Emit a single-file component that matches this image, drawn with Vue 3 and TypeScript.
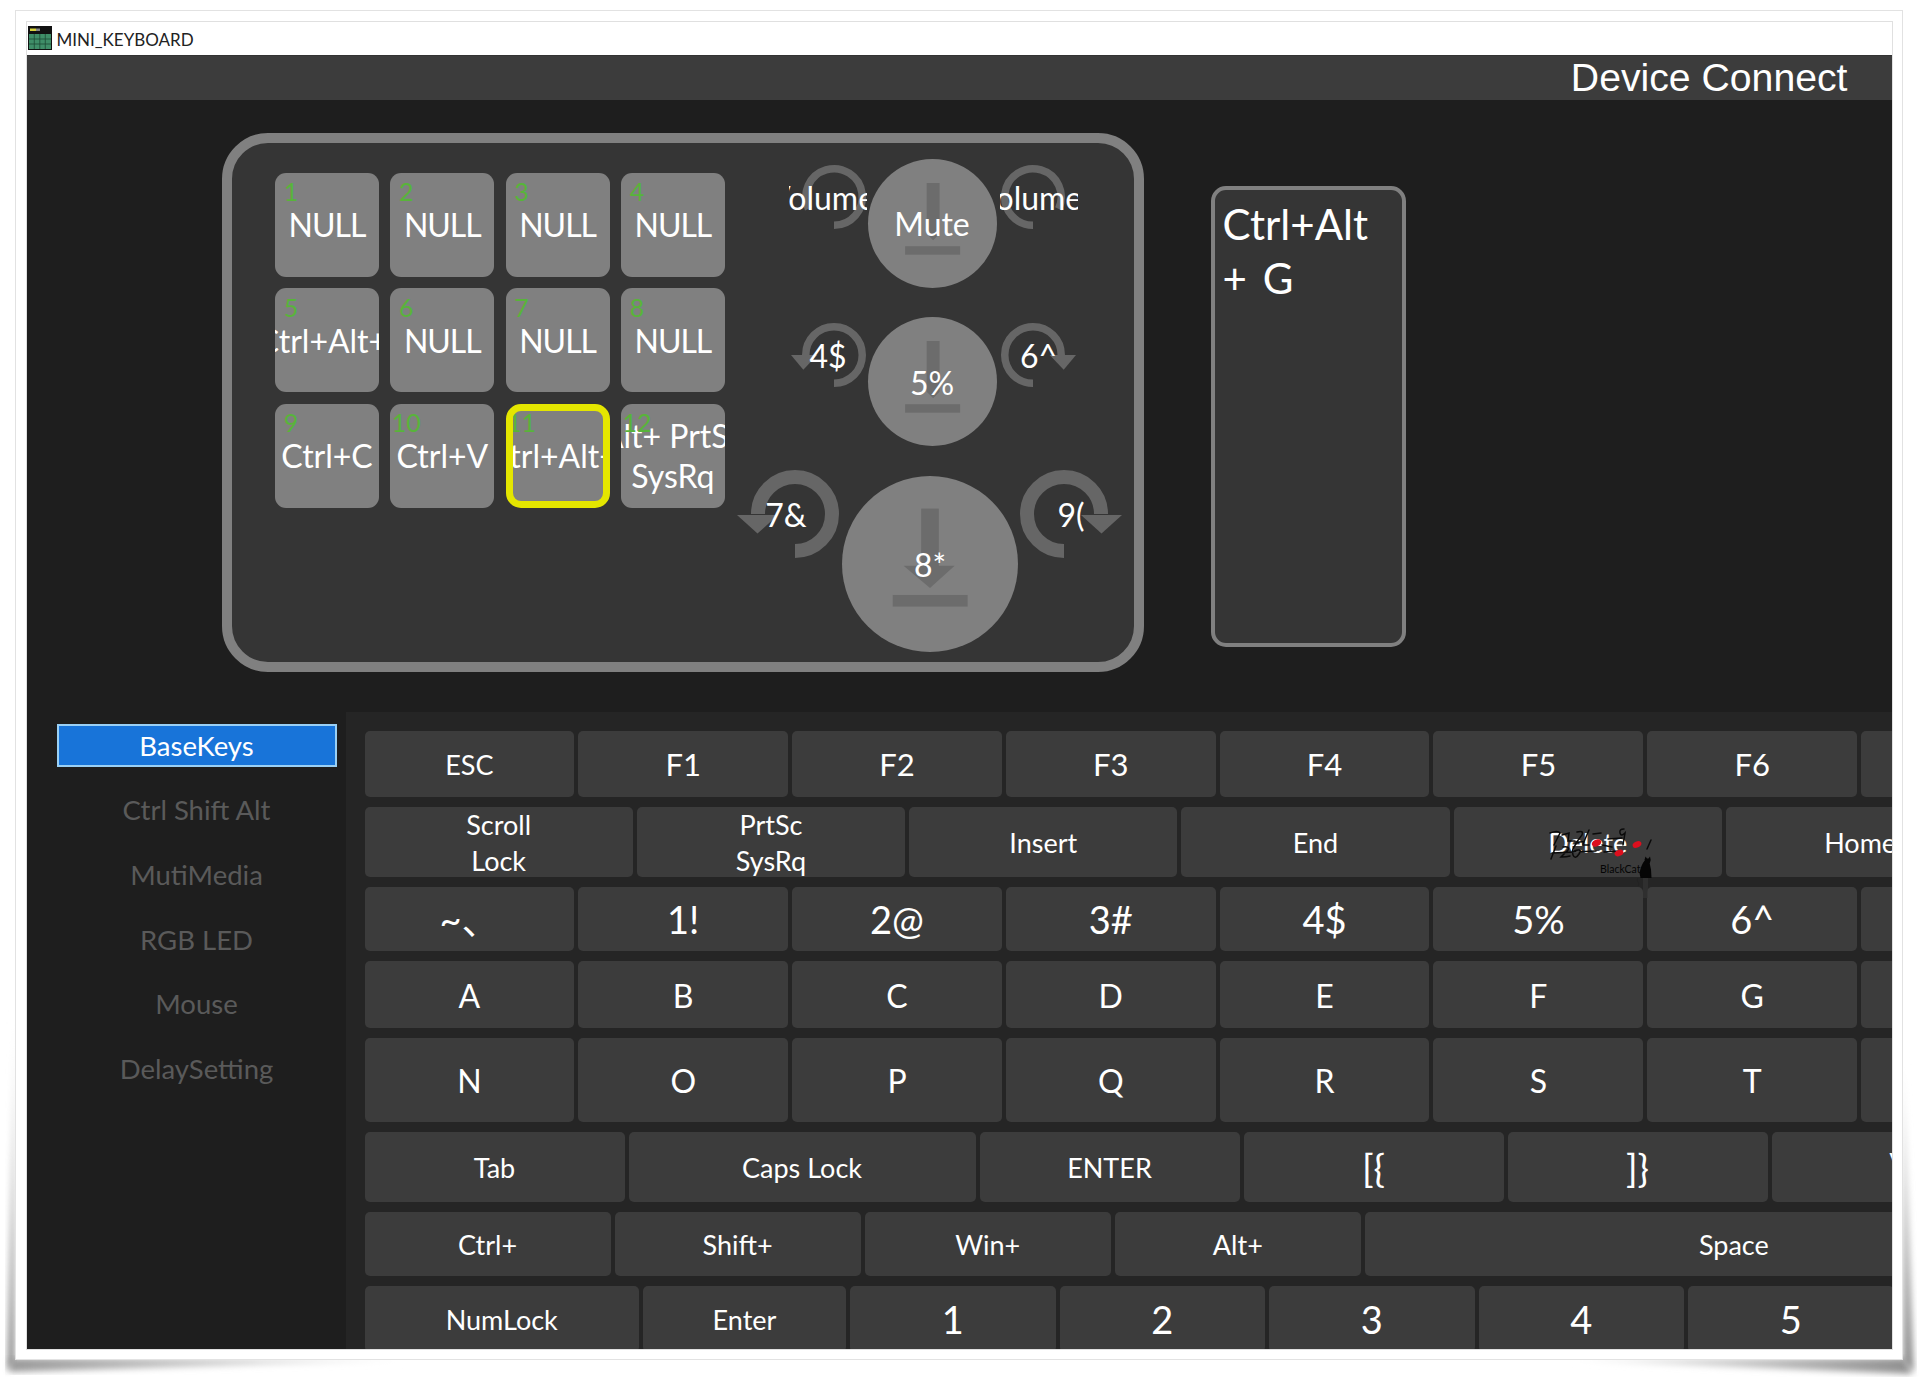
<script setup lang="ts">
interface PadKey { n: number; text: string; sel?: boolean }
interface Board { h: number; size: number; keys: { t: string; w: number }[] }

const padKeys: PadKey[] = [
  { n: 1, text: 'NULL' }, { n: 2, text: 'NULL' }, { n: 3, text: 'NULL' }, { n: 4, text: 'NULL' },
  { n: 5, text: 'Ctrl+Alt+' }, { n: 6, text: 'NULL' }, { n: 7, text: 'NULL' }, { n: 8, text: 'NULL' },
  { n: 9, text: 'Ctrl+C' }, { n: 10, text: 'Ctrl+V' }, { n: 11, text: 'Ctrl+Alt+', sel: true },
  { n: 12, text: 'Alt+ PrtSc\nSysRq' }
]

const smArc = 'M32 60.25A28.25 28.25 0 1 0 3.75 32'
const muteArc = 'M32 60.25A28.25 28.25 0 1 0 6.4 43.9'
const lgArc = 'M44 81A37 37 0 1 0 7 44'
const dials = [
  { size: 'sm', box: 64, sw: 7.5, arc: muteArc, head: '', left: 'Volume-', mid: 'Mute', right: 'Volume+', arrow: false },
  { size: 'sm', box: 64, sw: 7.5, arc: smArc, head: '-11,32 15.3,32 1.3,46.7', left: '4$', mid: '5%', right: '6^', arrow: false },
  { size: 'lg', box: 88, sw: 14, arc: lgArc, head: '-14,45 27,45 6.5,63.5', left: '7&', mid: '8*', right: '9(', arrow: true }
]

const row = (h: number, size: number, w: number, labels: string[]): Board => ({
  h, size, keys: labels.map((t) => ({ t, w }))
})
const boardRows: Board[] = [
  row(66, 27, 209.8, ['ESC', 'F1', 'F2', 'F3', 'F4', 'F5', 'F6', 'F7']),
  row(70.5, 27, 268.3, ['Scroll\nLock', 'PrtSc\nSysRq', 'Insert', 'End', 'Delete', 'Home']),
  row(64, 38, 209.8, ['~、', '1!', '2@', '3#', '4$', '5%', '6^', '7&']),
  row(66.5, 32, 209.8, ['A', 'B', 'C', 'D', 'E', 'F', 'G', 'H']),
  row(84, 32, 209.8, ['N', 'O', 'P', 'Q', 'R', 'S', 'T', 'U']),
  { h: 70, size: 27, keys: [
    { t: 'Tab', w: 260 }, { t: 'Caps Lock', w: 347 }, { t: 'ENTER', w: 260 },
    { t: '[{', w: 260 }, { t: ']}', w: 260 }, { t: '\\|', w: 260 }
  ] },
  { h: 64, size: 27, keys: [
    { t: 'Ctrl+', w: 246.1 }, { t: 'Shift+', w: 246.1 }, { t: 'Win+', w: 246.1 },
    { t: 'Alt+', w: 246.1 }, { t: 'Space', w: 738 }
  ] },
  { h: 66, size: 27, keys: [
    { t: 'NumLock', w: 274.5 }, { t: 'Enter', w: 203 }, { t: '1', w: 205.5 }, { t: '2', w: 205.5 },
    { t: '3', w: 205.5 }, { t: '4', w: 205.5 }, { t: '5', w: 205.5 }
  ] }
]

const bigKeys = new Set(['[{', ']}', '\\|', '1', '2', '3', '4', '5'])
const keyFont = (t: string, size: number): number => {
  if (bigKeys.has(t)) return 38
  if (/^F\d$/.test(t)) return 31
  return size
}

const menu = ['BaseKeys', 'Ctrl Shift Alt', 'MutiMedia', 'RGB LED', 'Mouse', 'DelaySetting']
</script>

<template>
  <div class="page">
    <svg class="shadow" viewBox="0 0 1920 1377" aria-hidden="true">
      <defs>
        <filter id="soft" x="-20%" y="-20%" width="140%" height="140%"><feGaussianBlur stdDeviation="3" /></filter>
        <linearGradient id="sl" x1="0" y1="1" x2="0" y2="0">
          <stop offset="0" stop-color="#8f8f8f" /><stop offset="1" stop-color="#ffffff" />
        </linearGradient>
        <linearGradient id="sb" x1="0" y1="0" x2="1" y2="0">
          <stop offset="0" stop-color="#9a9a9a" /><stop offset="1" stop-color="#ffffff" />
        </linearGradient>
        <linearGradient id="sbr" x1="1" y1="0" x2="0" y2="0">
          <stop offset="0" stop-color="#8f8f8f" /><stop offset="1" stop-color="#ffffff" />
        </linearGradient>
        <linearGradient id="sr" x1="0" y1="1" x2="0" y2="0">
          <stop offset="0" stop-color="#8f8f8f" /><stop offset="1" stop-color="#ffffff" />
        </linearGradient>
      </defs>
      <polygon points="15,1000 15,1362 7,1372" fill="url(#sl)" filter="url(#soft)" />
      <polygon points="10,1358 420,1360 10,1372" fill="url(#sb)" filter="url(#soft)" />
      <polygon points="1905,1358 1560,1360 1912,1374" fill="url(#sbr)" filter="url(#soft)" />
      <polygon points="1903,1050 1903,1362 1914,1372" fill="url(#sr)" filter="url(#soft)" />
    </svg>
    <div class="frame">
      <div class="window">
        <div class="titlebar">
          <svg class="appicon" viewBox="0 0 24 24" aria-hidden="true">
            <rect width="24" height="24" fill="#111" />
            <rect x="2" y="2.5" width="6" height="2.5" fill="#d6d23c" />
            <rect x="8" y="2.5" width="4" height="2.5" fill="#888" />
            <rect x="1" y="8" width="22" height="15" fill="#3f8e68" />
            <path d="M6.3 8v15M11.8 8v15M17.3 8v15M1 13h22M1 18h22" stroke="#1d4a35" stroke-width=".8" />
          </svg>
          <span class="apptitle">MINI_KEYBOARD</span>
        </div>
        <div class="header">Device Connect</div>

        <div class="top">
          <div class="panel">
            <div class="padgrid">
              <div v-for="k in padKeys" :key="k.n" class="padkey" :class="{ sel: k.sel }">
                <span class="num">{{ k.n }}</span>
                <span
                  class="padtext"
                  :class="{ tight: k.text === 'NULL', wide: k.text === 'Ctrl+Alt+' }"
                >{{ k.text }}</span>
              </div>
            </div>
            <div class="dials">
              <div v-for="d in dials" :key="d.mid" class="dialrow" :class="d.size">
                <div class="dial">
                  <svg class="arc" :viewBox="`0 0 ${d.box} ${d.box}`" aria-hidden="true">
                    <path :d="d.arc" fill="none" stroke="#666" :stroke-width="d.sw" />
                    <polygon v-if="d.head" :points="d.head" fill="#666" />
                  </svg>
                  <div class="lab lab-l"><span>{{ d.left }}</span></div>
                </div>
                <div class="disc">
                  <svg class="discicon" viewBox="0 0 100 100" aria-hidden="true">
                    <template v-if="d.arrow">
                      <rect x="45" y="18.5" width="10" height="33" fill="#6c6c6c" />
                      <polygon points="35,51 64,51 50,63.6" fill="#6c6c6c" />
                    </template>
                    <path v-else d="M45.5 18.6h10V58L50.5 63L45.5 58Z" fill="#6c6c6c" />
                    <rect x="28.8" y="67.6" width="42.6" height="6.6" fill="#6c6c6c" />
                  </svg>
                  <span class="disctext">{{ d.mid }}</span>
                </div>
                <div class="dial dial-r">
                  <svg class="arc mirror" :viewBox="`0 0 ${d.box} ${d.box}`" aria-hidden="true">
                    <path :d="d.arc" fill="none" stroke="#666" :stroke-width="d.sw" />
                    <polygon v-if="d.head" :points="d.head" fill="#666" />
                  </svg>
                  <div class="lab lab-r"><span>{{ d.right }}</span></div>
                </div>
              </div>
            </div>
          </div>
          <div class="display">Ctrl+Alt<br />+ G</div>
        </div>

        <div class="bottom">
          <nav class="sidebar">
            <div v-for="(m, i) in menu" :key="m" class="menuitem" :class="{ active: i === 0 }">{{ m }}</div>
          </nav>
          <div class="board">
            <div v-for="(r, ri) in boardRows" :key="ri" class="boardrow" :style="{ height: r.h + 'px' }">
              <div
                v-for="k in r.keys"
                :key="k.t"
                class="kbkey"
                :style="{ width: k.w + 'px', fontSize: keyFont(k.t, r.size) + 'px' }"
              >{{ k.t }}</div>
            </div>
            <svg class="stamp" viewBox="0 0 170 90" aria-hidden="true">
              <g fill="none" stroke="#0a0a0a" stroke-width="1.5" stroke-linecap="round">
                <path d="M30 23q8-3 10 0l-6 12M42 25l7-2-1 8h7M57 22q7-2 5 3l-6 8q6-2 8-1M69 20l-6 14M73 24l8-1M88 29l14-1" />
                <path d="M104 19q-5 0-4 4t5 0l-2 12" />
                <path d="M36 36l-5 13M43 37q7-1 5 3l-7 7q6 0 9-1M56 34q-5 6-3 11t6-1-5-3M82 35l10 2M63 35h6M32 43l44-2M84 42l16-1" />
                <path d="M127 39l4-9" />
              </g>
              <g fill="#dd0f1e">
                <ellipse cx="76.5" cy="33" rx="5" ry="3.4" transform="rotate(-25 76.5 33)" />
                <ellipse cx="99" cy="43" rx="4.6" ry="3" transform="rotate(-20 99 43)" />
                <ellipse cx="117" cy="34.5" rx="4.6" ry="3" transform="rotate(-25 117 34.5)" />
              </g>
              <text x="80" y="63" class="stamptext">BlackCat</text>
              <path d="M124.5 50l1-3.5 1.5 2h1.5l1.5-2 .7 3.5-1 3.5 1.3 6 .5 8.500h-11l-1-5q1.500-8 5.500-13Z" fill="#050505" />
              <path d="M118 68q-2 2 0 4t0 4" fill="none" stroke="#222" stroke-width="1" />
              <rect x="123" y="68" width="5" height="20" fill="#333" opacity=".7" />
            </svg>
          </div>
        </div>
      </div>
    </div>
  </div>
</template>

<style>
html, body { margin: 0; background: #fff; }
</style>

<style scoped>
.page {
  position: relative;
  width: 1920px;
  height: 1377px;
  box-sizing: border-box;
  padding: 10px 17px 17px 15px;
  background: #fff;
  font-family: "Lato", "Noto Sans CJK SC", sans-serif;
  overflow: hidden;
}
.shadow {
  position: absolute;
  inset: 0;
  width: 1920px;
  height: 1377px;
}
.frame {
  position: relative;
  box-sizing: border-box;
  height: 100%;
  border: 1.5px solid #e2e2e2;
  background: #fff;
  padding: 10.5px 10.5px 10.5px 10.5px;
}
.window {
  display: flex;
  flex-direction: column;
  height: 100%;
  background: #1e1e1e;
  overflow: hidden;
  outline: 1px solid #e0e0e0;
}
.titlebar {
  flex: none;
  height: 33px;
  display: flex;
  align-items: center;
  gap: 5px;
  padding-left: 1px;
  background: #fff;
  color: #222;
  font-size: 17px;
}
.apptitle { padding-top: 2px; }
.appicon { width: 24px; height: 24px; }
.header {
  flex: none;
  height: 45px;
  box-sizing: border-box;
  padding-right: 44px;
  text-align: right;
  background: #3c3c3c;
  border-top: 1px solid #333;
  color: #fff;
  font: 39.2px/44px "Liberation Sans", Arial, sans-serif;
}
.top {
  flex: none;
  height: 612px;
  box-sizing: border-box;
  display: flex;
  align-items: flex-start;
  padding: 33px 0 0 195.5px;
}
.panel {
  flex: none;
  box-sizing: border-box;
  width: 922px;
  height: 539px;
  display: flex;
  align-items: flex-start;
  border: 10px solid #808080;
  border-radius: 46px;
  background: #353535;
  padding: 0 0 0 43px;
}
.padgrid {
  flex: none;
  width: 450px;
  margin-top: 30px;
  display: grid;
  grid-template-columns: repeat(4, 104px);
  grid-auto-rows: 104px;
  column-gap: 11.3px;
  row-gap: 11.5px;
}
.padkey {
  position: relative;
  overflow: hidden;
  box-sizing: border-box;
  display: flex;
  align-items: center;
  justify-content: center;
  border-radius: 11px;
  background: #808080;
  color: #fff;
  font-size: 32px;
  line-height: 40px;
}
.padkey.sel { border: 7px solid #e4e600; border-radius: 15px; }
.num {
  position: absolute;
  left: 0;
  top: 3.5px;
  width: 32px;
  text-align: center;
  color: #58b43a;
  font-size: 25px;
  line-height: 30px;
}
.sel .num { left: -7px; top: -3.5px; }
.padtext {
  flex: none;
  padding-top: 1px;
  white-space: pre;
  text-align: center;
}
.padtext.tight { letter-spacing: -1px; }
.padtext.wide { padding-right: 9px; }
.dials {
  flex: none;
  width: 400px;
  margin-left: 7px;
  padding-top: 16px;
  display: flex;
  flex-direction: column;
  gap: 29.5px;
}
.dialrow { display: flex; align-items: flex-start; }
.dialrow.sm { padding-left: 70px; }
.dialrow.lg { padding-left: 19px; }
.dial {
  position: relative;
  flex: none;
  margin-top: 6px;
}
.sm .dial { width: 64px; height: 64px; }
.lg .dial { width: 88px; height: 88px; margin-top: -6px; }
.arc {
  display: block;
  width: 100%;
  height: 100%;
  overflow: visible;
}
.mirror { transform: scaleX(-1); }
.lab {
  position: absolute;
  width: 78px;
  height: 40px;
  overflow: hidden;
  display: flex;
  align-items: center;
  justify-content: center;
  color: #fff;
  font-size: 32px;
  white-space: nowrap;
}
.lab span { flex: none; }
.sm .lab { top: 12.5px; }
.lg .lab { top: 25px; }
.sm .lab-l { left: -13px; }
.sm .lab-r { left: -1px; }
.lg .lab-l { left: -4px; }
.lg .lab-r { left: 12px; }
.disc {
  position: relative;
  flex: none;
  display: flex;
  align-items: center;
  justify-content: center;
  border-radius: 50%;
  background: #808080;
  color: #fff;
  font-size: 32px;
}
.sm .disc { width: 129px; height: 129px; margin: 0 4px 0 1.5px; }
.lg .disc { width: 176px; height: 176px; margin: 0 2px 0 3px; }
.discicon { position: absolute; inset: 0; width: 100%; height: 100%; }
.disctext { position: relative; padding-top: 1px; }
.display {
  flex: none;
  box-sizing: border-box;
  width: 195px;
  height: 461px;
  margin: 53px 0 0 66.6px;
  padding: 7px 8px;
  border: 4px solid #808080;
  border-radius: 15px;
  background: #353535;
  color: #fff;
  font-size: 42px;
  line-height: 54px;
  word-spacing: 5px;
}
.bottom {
  flex: 1;
  min-height: 0;
  display: flex;
}
.sidebar {
  flex: none;
  width: 319.5px;
  box-sizing: border-box;
  padding: 12px 0 0 30px;
  display: flex;
  flex-direction: column;
  gap: 21.7px;
}
.menuitem {
  flex: none;
  width: 280px;
  height: 43px;
  display: flex;
  align-items: center;
  justify-content: center;
  box-sizing: border-box;
  color: #5a5a5a;
  font-size: 27.5px;
}
.menuitem.active {
  background: #1874d9;
  border: 2px solid #9ad0f5;
  color: #fff;
}
.board {
  position: relative;
  flex: 1;
  min-width: 0;
  box-sizing: border-box;
  padding: 19px 0 0 18.5px;
  background: #252525;
  overflow: hidden;
  display: flex;
  flex-direction: column;
  gap: 10px;
}
.boardrow {
  flex: none;
  display: flex;
  gap: 4px;
}
.kbkey {
  flex: none;
  box-sizing: border-box;
  display: flex;
  align-items: center;
  justify-content: center;
  overflow: hidden;
  padding-top: 2px;
  border-radius: 5px;
  background: #3c3c3c;
  color: #fff;
  line-height: 35.5px;
  white-space: pre;
  text-align: center;
}
.stamp {
  position: absolute;
  left: 1174px;
  top: 98px;
  width: 170px;
  height: 90px;
  pointer-events: none;
}
.stamptext {
  font-family: "Lato", sans-serif;
  font-size: 10.5px;
  fill: #050505;
}
</style>
